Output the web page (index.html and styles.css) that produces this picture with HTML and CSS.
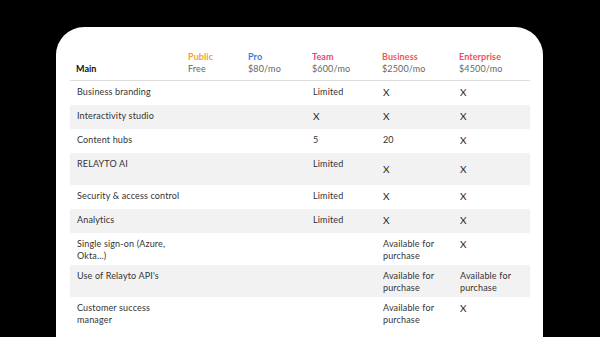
FILE: index.html
```html
<!DOCTYPE html>
<html lang="en">
<head>
    <meta charset="UTF-8">
    <meta name="viewport" content="width=device-width, initial-scale=1.0">
    <title>Pricing</title>
    <link rel="stylesheet" href="styles.css">
</head>
<body>
    <section class="card">
        <table class="plans">
            <colgroup>
                <col class="col-main">
                <col class="col-public">
                <col class="col-pro">
                <col class="col-team">
                <col class="col-business">
                <col class="col-enterprise">
            </colgroup>
            <thead>
                <tr>
                    <th class="main">Main</th>
                    <th><span class="plan public">Public</span><span class="price">Free</span></th>
                    <th><span class="plan pro">Pro</span><span class="price">$80/mo</span></th>
                    <th><span class="plan team">Team</span><span class="price">$600/mo</span></th>
                    <th><span class="plan business">Business</span><span class="price">$2500/mo</span></th>
                    <th><span class="plan enterprise">Enterprise</span><span class="price">$4500/mo</span></th>
                </tr>
            </thead>
            <tbody>
                <tr class="single">
                    <td>Business branding</td>
                    <td></td><td></td>
                    <td>Limited</td>
                    <td class="x">X</td>
                    <td class="x">X</td>
                </tr>
                <tr class="single shaded">
                    <td>Interactivity studio</td>
                    <td></td><td></td>
                    <td class="x">X</td>
                    <td class="x">X</td>
                    <td class="x">X</td>
                </tr>
                <tr class="single">
                    <td>Content hubs</td>
                    <td></td><td></td>
                    <td>5</td>
                    <td>20</td>
                    <td class="x">X</td>
                </tr>
                <tr class="double shaded">
                    <td>RELAYTO AI</td>
                    <td></td><td></td>
                    <td>Limited</td>
                    <td class="x middle">X</td>
                    <td class="x middle">X</td>
                </tr>
                <tr class="single">
                    <td>Security &amp; access control</td>
                    <td></td><td></td>
                    <td>Limited</td>
                    <td class="x">X</td>
                    <td class="x">X</td>
                </tr>
                <tr class="single shaded">
                    <td>Analytics</td>
                    <td></td><td></td>
                    <td>Limited</td>
                    <td class="x">X</td>
                    <td class="x">X</td>
                </tr>
                <tr class="double">
                    <td>Single sign-on (Azure, Okta...)</td>
                    <td></td><td></td><td></td>
                    <td>Available for purchase</td>
                    <td class="x">X</td>
                </tr>
                <tr class="double shaded">
                    <td>Use of Relayto API's</td>
                    <td></td><td></td><td></td>
                    <td>Available for purchase</td>
                    <td>Available for purchase</td>
                </tr>
                <tr class="double">
                    <td>Customer success manager</td>
                    <td></td><td></td><td></td>
                    <td>Available for purchase</td>
                    <td class="x">X</td>
                </tr>
            </tbody>
        </table>
    </section>
</body>
</html>
```

FILE: styles.css
```css
body {
    margin: 0;
    background: #000;
    font-family: 'Lato', sans-serif;
    color: #333;
    overflow: hidden;
}

.card {
    background: #FFF;
    margin: 27px 0 0 56px;
    width: 487px;
    height: 310px;
    padding: 24px 13px 0 14px;
    box-sizing: border-box;
    border-radius: 28px 28px 0 0;
}

.plans {
    width: 460px;
    table-layout: fixed;
    border-collapse: collapse;
    font-size: 9px;
    line-height: 12px;
    letter-spacing: 0.15px;
}

.col-main { width: 112px; }
.col-public { width: 60px; }
.col-pro { width: 64px; }
.col-team { width: 70px; }
.col-business { width: 77px; }
.col-enterprise { width: 77px; }

.plans th {
    text-align: left;
    vertical-align: bottom;
    font-weight: normal;
    padding: 0 2px 5px 6px;
    border-bottom: 1px solid #DDD;
}

.plans th.main {
    font-weight: bold;
    color: #111;
    letter-spacing: 0;
}

.plan {
    display: block;
    font-weight: bold;
    letter-spacing: 0.1px;
}

.price {
    display: block;
    color: #666;
}

.public { color: #F2A12E; }
.pro { color: #3A7BE0; }
.team { color: #E8477E; }
.business { color: #EF5B4C; }
.enterprise { color: #EE4F62; }

.plans td {
    vertical-align: top;
    padding: 5px 2px 0 7px;
}

.plans tr.single { height: 24px; }
.plans tr.double { height: 32px; }

.plans tr.shaded td {
    background: #F2F2F2;
}

.plans td.x {
    font-size: 10px;
    color: #222;
}

.plans td.middle {
    vertical-align: middle;
    padding-top: 0;
}
```
